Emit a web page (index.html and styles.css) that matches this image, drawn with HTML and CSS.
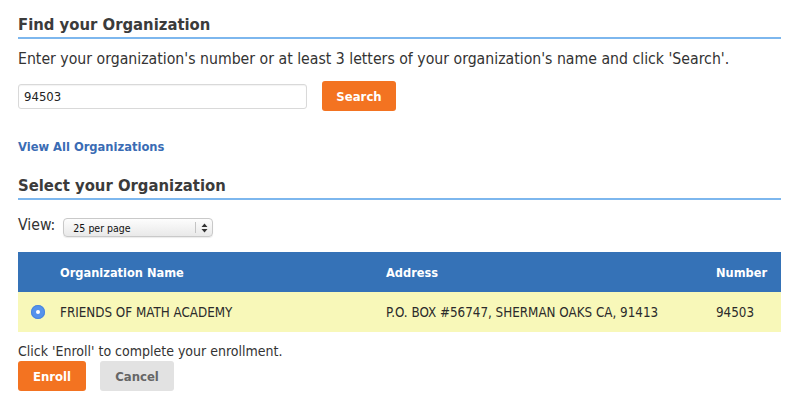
FILE: index.html
```html
<!DOCTYPE html>
<html>
<head>
<meta charset="utf-8">
<link rel="stylesheet" href="styles.css">
</head>
<body>
<div class="page">
  <h2 class="section-title">Find your Organization</h2>
  <p class="intro">Enter your organization's number or at least 3 letters of your organization's name and click 'Search'.</p>
  <div class="search-row">
    <div class="text-input">94503</div>
    <button class="btn btn-primary btn-search">Search</button>
  </div>
  <a class="view-all" href="#">View All Organizations</a>
  <h2 class="section-title second">Select your Organization</h2>
  <div class="view-row">
    <span class="view-label">View:</span>
    <div class="select">
      <span class="select-text">25 per page</span>
      <span class="select-arrows"><svg width="7" height="10" viewBox="0 0 7 10"><path d="M3.5 0.5 L6.5 4 H0.5 Z M3.5 9.5 L6.5 6 H0.5 Z" fill="#333"/></svg></span>
    </div>
  </div>
  <div class="table">
    <div class="thead">
      <div class="c-radio"></div>
      <div class="c-name">Organization Name</div>
      <div class="c-addr">Address</div>
      <div class="c-num">Number</div>
    </div>
    <div class="trow">
      <div class="c-radio"><span class="radio"></span></div>
      <div class="c-name">FRIENDS OF MATH ACADEMY</div>
      <div class="c-addr">P.O. BOX #56747, SHERMAN OAKS CA, 91413</div>
      <div class="c-num">94503</div>
    </div>
  </div>
  <p class="note">Click 'Enroll' to complete your enrollment.</p>
  <div class="actions">
    <button class="btn btn-primary btn-enroll">Enroll</button>
    <button class="btn btn-cancel">Cancel</button>
  </div>
</div>
</body>
</html>
```

FILE: styles.css
```css
* { box-sizing: border-box; }
html, body { margin: 0; padding: 0; background: #fff; }
body {
  font-family: "DejaVu Sans Condensed", "DejaVu Sans", sans-serif;
  color: #333;
}
.page {
  width: 781px;
  padding-left: 18px;
  padding-top: 15px;
}
.section-title {
  margin: 0;
  font-size: 16.5px;
  font-weight: bold;
  color: #3b3b3b;
  line-height: 20px;
  padding-bottom: 2px;
  border-bottom: 2px solid #7db7ee;
}
.intro {
  margin: 10px 0 0;
  font-size: 15.7px;
  line-height: 20px;
}
.search-row {
  display: flex;
  align-items: center;
  gap: 15px;
  margin-top: 12px;
  height: 30px;
}
.text-input {
  width: 289px;
  height: 25px;
  border: 1px solid #d9d9d9;
  border-radius: 3px;
  font-size: 13px;
  line-height: 23px;
  padding-left: 5px;
  color: #222;
  box-shadow: inset 0 1px 1px rgba(0,0,0,0.05);
}
.btn {
  font-family: inherit;
  font-weight: bold;
  font-size: 13px;
  border: none;
  border-radius: 3px;
  height: 30px;
  padding: 0;
  cursor: pointer;
}
.btn-primary { background: #f37321; color: #fff; }
.btn-search { width: 74px; height: 30px; }
.view-all {
  display: block;
  margin-top: 28px;
  font-size: 12.8px;
  font-weight: bold;
  color: #3a6cb4;
  text-decoration: none;
  line-height: 16px;
}
.section-title.second { margin-top: 21px; }
.view-row {
  display: flex;
  align-items: flex-start;
  gap: 8px;
  margin-top: 18px;
  height: 19px;
}
.view-label { font-size: 15.7px; line-height: 14px; }
.select {
  width: 150px;
  height: 19px;
  border-radius: 4px;
  border: 1px solid #c9c9c9;
  background: linear-gradient(#fdfdfd, #e9e9e9);
  display: flex;
  align-items: center;
  font-size: 10.5px;
  color: #111;
  box-shadow: 0 1px 1px rgba(0,0,0,0.08);
}
.select-text { flex: 1; padding-left: 9px; }
.select-arrows {
  width: 17px;
  height: 11px;
  border-left: 1px solid #c4c4c4;
  display: flex;
  align-items: center;
  justify-content: center;
}
.table {
  margin-top: 15px;
  width: 763px;
}
.thead, .trow {
  display: grid;
  grid-template-columns: 42px 326px 330px 1fr;
  align-items: center;
  height: 40px;
}
.thead { background: #3572b7; color: #fff; font-weight: bold; font-size: 12.7px; }
.trow { background: #f8f8b9; color: #2b2b2b; font-size: 13.3px; }
.radio {
  display: block;
  width: 14px;
  height: 14px;
  margin-left: 13px;
  border-radius: 50%;
  background: #5593ec;
  position: relative;
  box-shadow: inset 0 0 0 1px #4a86de;
}
.radio::after {
  content: "";
  position: absolute;
  left: 5px; top: 5px;
  width: 4px; height: 4px;
  border-radius: 50%;
  background: #fff;
}
.note {
  margin: 10px 0 0;
  font-size: 14px;
  line-height: 18px;
}
.actions {
  display: flex;
  gap: 14px;
  margin-top: 1px;
}
.btn-enroll { width: 68px; }
.btn-cancel { width: 74px; background: #e2e2e2; color: #666; }
```
